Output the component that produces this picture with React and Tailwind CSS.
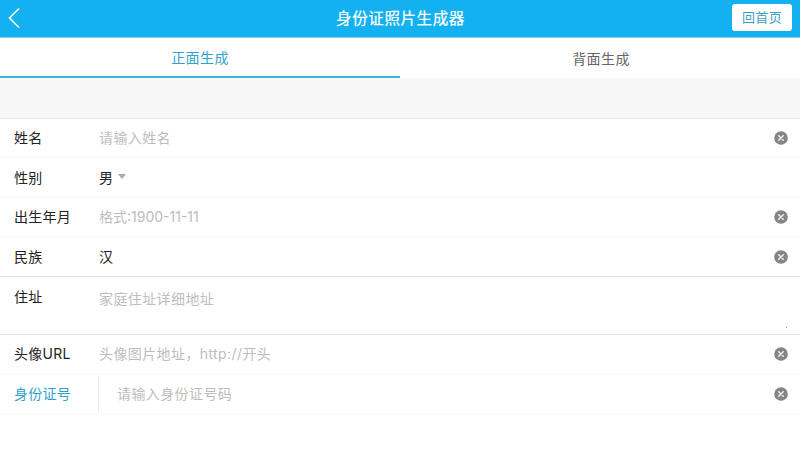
const font = { fontFamily: 'Inter, "Noto Sans CJK SC", "Noto Sans", sans-serif' };

function ClearIcon() {
  return (
    <svg width="14" height="14" viewBox="0 0 14 14" className="shrink-0 mt-[1px]">
      <circle cx="7" cy="7" r="6.8" fill="#858585" />
      <path d="M4.7 4.7l4.6 4.6M9.3 4.7l-4.6 4.6" stroke="#f2f2f2" strokeWidth="1.4" strokeLinecap="round" />
    </svg>
  );
}

function Row({ label, placeholder, value, border = 'border-[#f7f7f7]', height = 'h-[39.4px]', tracking = 'tracking-[0.4px]' }) {
  return (
    <div className={`flex items-center pl-[14px] pr-[12px] pb-[1px] border-b ${border} ${height}`}>
      <label className="w-[85px] shrink-0 text-[14px] tracking-[0.25px] text-[#222]">{label}</label>
      <input
        className={`flex-1 min-w-0 bg-transparent text-[14px] ${tracking} text-[#222] placeholder:text-[#bdbdbd] outline-none`}
        placeholder={placeholder}
        defaultValue={value}
      />
      <ClearIcon />
    </div>
  );
}

export default function App() {
  return (
    <div className="w-[800px] h-[450px] overflow-hidden bg-white" style={font}>
      <header className="flex items-center h-[38px] pl-[7px] pr-[8px] bg-[#13b1ef] border-b border-[#7fd3f5]">
        <div className="w-[61px]">
          <svg width="14" height="22" viewBox="0 0 14 22" className="mt-[-1px]">
            <path d="M12 1.5L2.5 11l9.5 9.5" fill="none" stroke="#fff" strokeWidth="1.6" />
          </svg>
        </div>
        <h1 className="flex-1 pl-[1px] text-center text-[15.5px] tracking-[0.6px] text-white" style={{ WebkitTextStroke: '0.2px #fff' }}>身份证照片生成器</h1>
        <button className="w-[60px] h-[27px] mt-[-2px] rounded-[3px] bg-white text-[13px] tracking-[0.3px] text-[#3f9fc0]">回首页</button>
      </header>

      <div className="flex h-[40px] text-[14px] tracking-[0.4px]">
        <div className="w-[400px] flex items-center justify-center border-b-2 border-[#3fb4dc] text-[#2fa3c9]">正面生成</div>
        <div className="flex-1 flex items-center justify-center pl-[2px] text-[#666]">背面生成</div>
      </div>

      <div className="h-[41px] bg-[#f7f7f7] border-b border-[#e6e6e6]"></div>

      <Row label="姓名" placeholder="请输入姓名" />

      <div className="flex items-center pl-[14px] pr-[12px] pb-[1px] h-[39.4px] border-b border-[#f7f7f7]">
        <label className="w-[85px] shrink-0 text-[14px] tracking-[0.25px] text-[#222]">性别</label>
        <span className="text-[14px] text-[#222]">男</span>
        <span className="ml-[5px] mt-[-1px] w-0 h-0 border-x-[4.5px] border-x-transparent border-t-[5px] border-t-[#aaa]"></span>
      </div>

      <Row label="出生年月" placeholder="格式:1900-11-11" tracking="tracking-[0px]" />
      <Row label="民族" value="汉" border="border-[#e0e0e0]" height="h-[40px]" />

      <div className="relative flex pl-[14px] h-[58px] border-b border-[#e6e6e6]">
        <label className="w-[85px] shrink-0 pt-[10px] text-[14px] tracking-[0.25px] leading-[20px] text-[#222]">住址</label>
        <textarea
          className="flex-1 resize-none bg-transparent pt-[12px] text-[14px] tracking-[0.4px] leading-[20px] placeholder:text-[#bdbdbd] outline-none"
          placeholder="家庭住址详细地址"
        />
        <span className="absolute right-[13px] bottom-[6px] w-[1px] h-[1px] bg-[#999]"></span>
      </div>

      <Row label="头像URL" placeholder="头像图片地址，http://开头" />

      <div className="flex items-center pl-[14px] pr-[12px] pb-[1px] h-[40px] border-b border-[#f7f7f7]">
        <label className="w-[85px] h-full flex items-center shrink-0 text-[14px] tracking-[0.25px] text-[#2fa3c9] border-r border-[#eee]">身份证号</label>
        <input
          className="flex-1 min-w-0 ml-[18px] bg-transparent text-[14px] tracking-[0.4px] placeholder:text-[#bdbdbd] outline-none"
          placeholder="请输入身份证号码"
        />
        <ClearIcon />
      </div>
    </div>
  );
}
